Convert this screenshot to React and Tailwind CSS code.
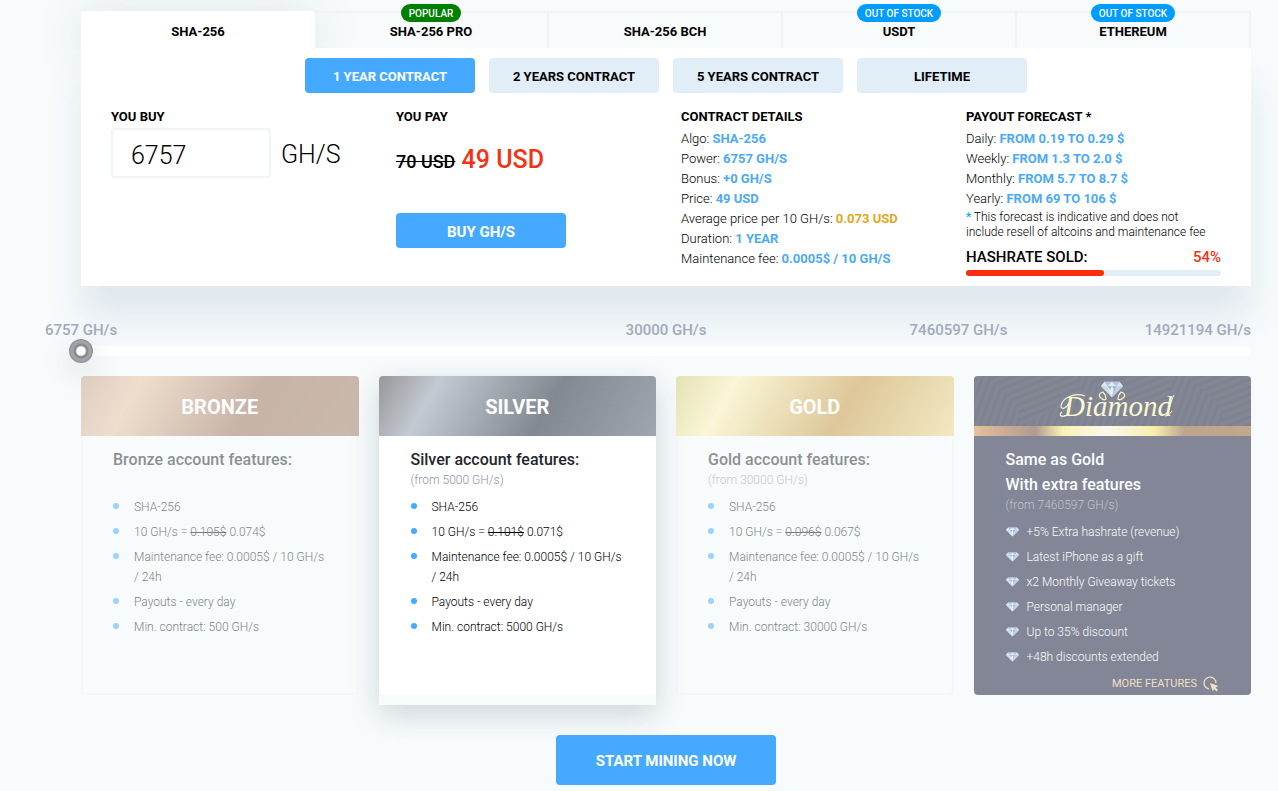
import clsx from 'clsx';
import { useState } from 'react';

const tabs = [
  { name: 'SHA-256' },
  { name: 'SHA-256 PRO', badge: 'POPULAR', badgeColor: 'bg-[#008000]' },
  { name: 'SHA-256 BCH' },
  { name: 'USDT', badge: 'OUT OF STOCK', badgeColor: 'bg-[#009cff]' },
  { name: 'ETHEREUM', badge: 'OUT OF STOCK', badgeColor: 'bg-[#009cff]' },
];

const periods = [
  '1 YEAR CONTRACT',
  '2 YEARS CONTRACT',
  '5 YEARS CONTRACT',
  'LIFETIME',
];

const details = [
  ['Algo', 'SHA-256'],
  ['Power', '6757 GH/S'],
  ['Bonus', '+0 GH/S'],
  ['Price', '49 USD'],
  ['Average price per 10 GH/s', '0.073 USD'],
  ['Duration', '1 YEAR'],
  ['Maintenance fee', '0.0005$ / 10 GH/S'],
];

const forecast = [
  ['Daily', 'FROM 0.19 TO 0.29 $'],
  ['Weekly', 'FROM 1.3 TO 2.0 $'],
  ['Monthly', 'FROM 5.7 TO 8.7 $'],
  ['Yearly', 'FROM 69 TO 106 $'],
];

const plans = [
  {
    name: 'BRONZE',
    title: 'Bronze account features:',
    oldPrice: '0.105$',
    price: '0.074$',
    min: '500 GH/s',
    header:
      'bg-[linear-gradient(120deg,#c8a388_0%,#e8c1a0_20%,#986e54_60%,#a0785f_100%)]',
  },
  {
    name: 'SILVER',
    title: 'Silver account features:',
    from: '(from 5000 GH/s)',
    oldPrice: '0.101$',
    price: '0.071$',
    min: '5000 GH/s',
    header:
      'bg-[linear-gradient(120deg,#969696_0%,#c4cad2_20%,#838990_60%,#a0a6ad_100%)]',
    active: true,
  },
  {
    name: 'GOLD',
    title: 'Gold account features:',
    from: '(from 30000 GH/s)',
    oldPrice: '0.096$',
    price: '0.067$',
    min: '30000 GH/s',
    header:
      'bg-[linear-gradient(120deg,#d2cc70_0%,#fef2b3_20%,#c6943a_60%,#eed88a_100%)]',
  },
];

const diamondFeatures = [
  '+5% Extra hashrate (revenue)',
  'Latest iPhone as a gift',
  'x2 Monthly Giveaway tickets',
  'Personal manager',
  'Up to 35% discount',
  '+48h discounts extended',
];

function Gem({ className }) {
  return (
    <svg className={className} viewBox="0 0 24 17" aria-hidden="true">
      <path d="M4 0h16l4 5-12 12L0 5z" fill="#a9c3e8" />
      <path d="M4 0l3 5H0z" fill="#c6d8f2" />
      <path d="M4 0h8L7 5z" fill="#6d8bbd" />
      <path d="M12 0l5 5H7z" fill="#c6d8f2" />
      <path d="M12 0h8l-3 5z" fill="#6d8bbd" />
      <path d="M20 0l4 5h-7z" fill="#b4c9e8" />
      <path d="M0 5h7l5 12z" fill="#a3badd" />
      <path d="M7 5l3 2 2 10z" fill="#eff5ff" />
      <path d="M7 5h5l-2 4z" fill="#55729f" />
      <path d="M12 5l-2 4 2 8 2-9z" fill="#d9e6fa" />
      <path d="M12 5h5l-5 12 2-9z" fill="#4f6c9b" />
      <path d="M17 5h7L12 17z" fill="#8fa9d1" />
    </svg>
  );
}

// Slanted stripes behind the diamond logo
function StripePattern() {
  return (
    <svg
      className="absolute inset-0 size-full"
      viewBox="0 0 278 50"
      preserveAspectRatio="none"
      aria-hidden="true"
    >
      <defs>
        <pattern
          id="steep"
          width="7"
          height="7"
          patternUnits="userSpaceOnUse"
          patternTransform="rotate(20)"
        >
          <rect width="3" height="7" fill="#000" fillOpacity="0.35" />
        </pattern>
        <pattern
          id="shallow"
          width="7"
          height="7"
          patternUnits="userSpaceOnUse"
          patternTransform="rotate(-22)"
        >
          <rect width="7" height="3" fill="#000" fillOpacity="0.35" />
        </pattern>
      </defs>
      <path d="M0 0h14l24 24 12 26H0z" fill="url(#steep)" />
      <path d="M14 0h88l6 14-58 36-12-26z" fill="url(#shallow)" />
      <path d="M102 0h14l32 50H50l58-36z" fill="url(#steep)" />
      <path d="M116 0h80l4 22-52 28z" fill="url(#shallow)" />
      <path d="M196 0h16l34 28 4 22H148l52-28z" fill="url(#steep)" />
      <path d="M212 0h66v50h-28l-4-22z" fill="url(#shallow)" />
    </svg>
  );
}

function DiamondLogo() {
  return (
    <svg
      className="relative h-[50px] w-[130px]"
      viewBox="0 0 130 50"
      role="img"
      aria-label="Diamond"
    >
      <path
        d="M21 39C14 42 11 39 15 36M38 20C28 16 15 22 14 30c0 4 5 3 8-3"
        fill="none"
        stroke="#fdf6a8"
        strokeWidth="1.2"
      />
      <text
        x="17"
        y="40"
        fill="#fdf6a8"
        fontFamily="'Liberation Serif', serif"
        fontStyle="italic"
        fontSize="29"
      >
        Diamond
      </text>
      <path
        d="M120 38c2-4 4-13 7-19M118 40c3 0 5-2 7-5"
        fill="none"
        stroke="#fdf6a8"
      />
      <path
        d="M56 16c-4 1-5 4-2 6 2 2 4 2 5 1 0-3-1-5-3-7zM74 16c4 1 5 4 2 6-2 2-4 2-5 1 0-3 1-5 3-7z"
        fill="#101433"
        stroke="#fdf08a"
        strokeWidth="1.2"
      />
      <svg x="54" y="5" width="22" height="17">
        <Gem />
      </svg>
    </svg>
  );
}

function CursorIcon() {
  return (
    <svg className="size-4" viewBox="0 0 16 16" aria-hidden="true">
      <path
        d="M6 13A6 6 0 1 1 13 7"
        fill="none"
        stroke="#eac88c"
        strokeWidth="1.3"
      />
      <path
        d="M7 7l8.500 3-3 1.500 2.500 2.500-1.500 1.500-2.500-2.500-1.300 2.500z"
        fill="#eac88c"
      />
    </svg>
  );
}

function Heading({ children }) {
  return <h3 className="text-[13px] leading-5 font-bold">{children}</h3>;
}

function InfoRow({ label, value }) {
  return (
    <li>
      {label}:{' '}
      <b
        className={clsx(
          'font-bold',
          value === '0.073 USD' ? 'text-[#e2a71e]' : 'text-[#4baaf8]'
        )}
      >
        {value}
      </b>
    </li>
  );
}

function TabBar({ current, onSelect }) {
  return (
    <div className="grid grid-cols-5" role="tablist">
      {tabs.map(({ name, badge, badgeColor }, i) => (
        <button
          key={name}
          type="button"
          role="tab"
          aria-selected={current === i}
          onClick={() => onSelect(i)}
          className={clsx(
            'relative flex h-[37px] justify-center text-[13px] leading-5 font-bold',
            current === i
              ? 'rounded-t bg-white pt-[11px] shadow-[0_5px_50px_rgba(30,50,90,0.14)]'
              : 'border-t-2 border-r-2 border-[#eff5f7] pt-[9px]'
          )}
        >
          {name}
          {badge && (
            <span
              className={clsx(
                'absolute -top-[9px] rounded-full px-2 pt-px text-[10px] leading-[17px] font-medium text-white',
                badgeColor
              )}
            >
              {badge}
            </span>
          )}
        </button>
      ))}
    </div>
  );
}

function Calculator() {
  const [power, setPower] = useState('6757');
  const [period, setPeriod] = useState(0);

  return (
    <div className="relative bg-white px-[30px] py-[10px] shadow-[0_32px_36px_rgba(30,55,110,0.1)]">
      <div className="flex flex-wrap justify-center gap-[14px]">
        {periods.map((name, i) => (
          <button
            key={name}
            type="button"
            onClick={() => setPeriod(i)}
            className={clsx(
              'h-[35px] w-[170px] rounded pt-0.5 text-[13px] font-bold',
              period === i ? 'bg-[#45aaff] text-white' : 'bg-[#e1eef7]'
            )}
          >
            {name}
          </button>
        ))}
      </div>
      <div className="mt-[14px] grid grid-cols-4 gap-[30px]">
        <div>
          <Heading>
            <label htmlFor="power">YOU BUY</label>
          </Heading>
          <div className="mt-px flex items-center gap-[10px] text-[25px] font-light">
            <input
              id="power"
              className="h-[50px] w-[160px] rounded border-2 border-[#eef4f7] px-[18px] pt-1 outline-none"
              value={power}
              onChange={(e) => setPower(e.target.value)}
            />
            <span className="pt-1">GH/S</span>
          </div>
        </div>
        <div>
          <Heading>YOU PAY</Heading>
          <p className="mt-[18px] text-[25px] leading-[30px] font-medium text-[#f63214]">
            <s className="text-lg text-black">70 USD</s> 49 USD
          </p>
          <button
            type="button"
            className="mt-[37px] h-[35px] w-[170px] rounded bg-[#45aaff] pt-1 text-[15px] font-bold text-white"
          >
            BUY GH/S
          </button>
        </div>
        <div>
          <Heading>CONTRACT DETAILS</Heading>
          <ul className="mt-0.5 text-[13px] leading-5 font-light whitespace-nowrap">
            {details.map(([label, value]) => (
              <InfoRow key={label} label={label} value={value} />
            ))}
          </ul>
        </div>
        <div>
          <Heading>PAYOUT FORECAST *</Heading>
          <ul className="mt-0.5 text-[13px] leading-5 font-light">
            {forecast.map(([label, value]) => (
              <InfoRow key={label} label={label} value={value} />
            ))}
          </ul>
          <p className="mt-px pr-3 text-xs leading-[15px] font-light">
            <b className="text-[#009cff]">*</b> This forecast is indicative and
            does not include resell of altcoins and maintenance fee
          </p>
          <div className="mt-[7px] flex justify-between text-[15px] leading-5 font-medium">
            <span>HASHRATE SOLD:</span>
            <span className="text-[#f63214]">54%</span>
          </div>
          <div className="mt-[3px] h-1.5 rounded-full bg-[#e1eef7]">
            <div
              className="h-full rounded-full bg-[#ff2d0d]"
              style={{ width: '54%' }}
            />
          </div>
        </div>
      </div>
    </div>
  );
}

function PowerSlider() {
  const [value, setValue] = useState(0);

  return (
    <div className="relative mt-[33px]">
      <div className="grid grid-cols-4 text-[15px] leading-[22px] font-medium whitespace-nowrap text-[#a3a9bb]">
        <div className="col-span-2 flex w-0 justify-center">6757 GH/s</div>
        <div className="flex w-0 justify-center">30000 GH/s</div>
        <div className="flex justify-between">
          <span className="flex w-0 justify-center">7460597 GH/s</span>
          <span>14921194 GH/s</span>
        </div>
      </div>
      <div className="relative -mt-0.5 flex h-6 items-center">
        <div className="h-[10px] flex-1 rounded-full bg-white" />
        <input
          type="range"
          aria-label="Hashrate"
          min="0"
          max="100"
          value={value}
          onChange={(e) => setValue(e.target.value)}
          className="absolute inset-y-0 -right-3 -left-3 appearance-none bg-transparent [&::-webkit-slider-thumb]:size-6 [&::-webkit-slider-thumb]:appearance-none [&::-webkit-slider-thumb]:rounded-full [&::-webkit-slider-thumb]:bg-[radial-gradient(circle_closest-side,#ffffff_4px,#777b80_6px,#8f9397_7px,#a6aaae_9px,#8b8f94_12px)] [&::-webkit-slider-thumb]:shadow-[0_10px_30px_rgba(0,0,0,0.15)]"
        />
      </div>
    </div>
  );
}

function PlanCard({ plan }) {
  const features = [
    'SHA-256',
    <>
      10 GH/s = <s>{plan.oldPrice}</s> {plan.price}
    </>,
    'Maintenance fee: 0.0005$ / 10 GH/s / 24h',
    'Payouts - every day',
    `Min. contract: ${plan.min}`,
  ];

  return (
    <div
      className={clsx(
        'pb-[10px]',
        plan.active
          ? 'rounded-t bg-[#f8fbfb] shadow-[0_10px_30px_rgba(20,40,60,0.18)]'
          : 'opacity-50'
      )}
    >
      <article
        className={clsx(
          'flex h-full flex-col rounded',
          plan.active && 'bg-white'
        )}
      >
        <h2
          className={clsx(
            'h-[60px] rounded-t text-center text-xl leading-[62px] font-bold text-white',
            plan.header
          )}
        >
          {plan.name}
        </h2>
        <div
          className={clsx(
            'flex-1 rounded-b border-2 border-t-0 pt-[11px] pr-7 pl-[30px]',
            plan.active ? 'border-white' : 'border-[#eff4f6]'
          )}
        >
          <h3 className="text-base leading-[25px] font-medium text-[#24262b]">
            {plan.title}
          </h3>
          <p className="h-[17px] text-xs leading-[17px] font-light text-[#8d94a3]">
            {plan.from}
          </p>
          <ul className="mt-2 space-y-[5px] text-xs leading-5 font-light">
            {features.map((feature, i) => (
              <li key={i} className="flex gap-[15px]">
                <span className="mt-1.5 size-1.5 shrink-0 rounded-full bg-[#45aaff]" />
                <span>{feature}</span>
              </li>
            ))}
          </ul>
        </div>
      </article>
    </div>
  );
}

function DiamondCard() {
  return (
    <div className="pb-[10px] opacity-50">
      <article className="overflow-hidden rounded bg-[#101433]">
        <h2 className="relative flex h-[50px] justify-center">
          <StripePattern />
          <DiamondLogo />
        </h2>
        <div className="h-[10px] bg-[linear-gradient(90deg,#d68a3c_0%,#6e3c29_22%,#fee86d_32%,#fff8e3_48%,#fae463_65%,#865223_76%,#8c581b_100%)]" />
        <div className="px-8 pt-[11px] pb-px">
          <h3 className="text-base leading-[25px] font-medium text-white">
            Same as Gold
            <br />
            With extra features
          </h3>
          <p className="text-xs leading-[17px] font-light text-[#8d94a3]">
            (from 7460597 GH/s)
          </p>
          <ul className="mt-2 space-y-[5px] text-xs leading-5 font-light text-white">
            {diamondFeatures.map((feature) => (
              <li key={feature} className="flex items-center gap-2">
                <Gem className="h-[10px] w-[13px]" />
                {feature}
              </li>
            ))}
          </ul>
          <a
            href="#features"
            className="mt-[7px] flex items-center justify-end gap-1.5 text-[11px] leading-5 text-[#eac88c]"
          >
            MORE FEATURES
            <CursorIcon />
          </a>
        </div>
      </article>
    </div>
  );
}

function App() {
  const [tab, setTab] = useState(0);

  return (
    <main className="min-h-screen overflow-hidden bg-[#f7fbfc] pt-[11px] pr-[27px] pb-1.5 pl-[81px] font-['Roboto',sans-serif] text-black">
      <TabBar current={tab} onSelect={setTab} />
      <Calculator />
      <PowerSlider />
      <section className="relative mt-[13px] grid grid-cols-4 gap-5">
        {plans.map((plan) => (
          <PlanCard key={plan.name} plan={plan} />
        ))}
        <DiamondCard />
      </section>
      <div className="relative mt-[30px] flex justify-center">
        <button
          type="button"
          className="h-[50px] w-[220px] rounded bg-[#45aaff] pt-0.5 text-[15px] font-bold text-white"
        >
          START MINING NOW
        </button>
      </div>
    </main>
  );
}

export default App;
